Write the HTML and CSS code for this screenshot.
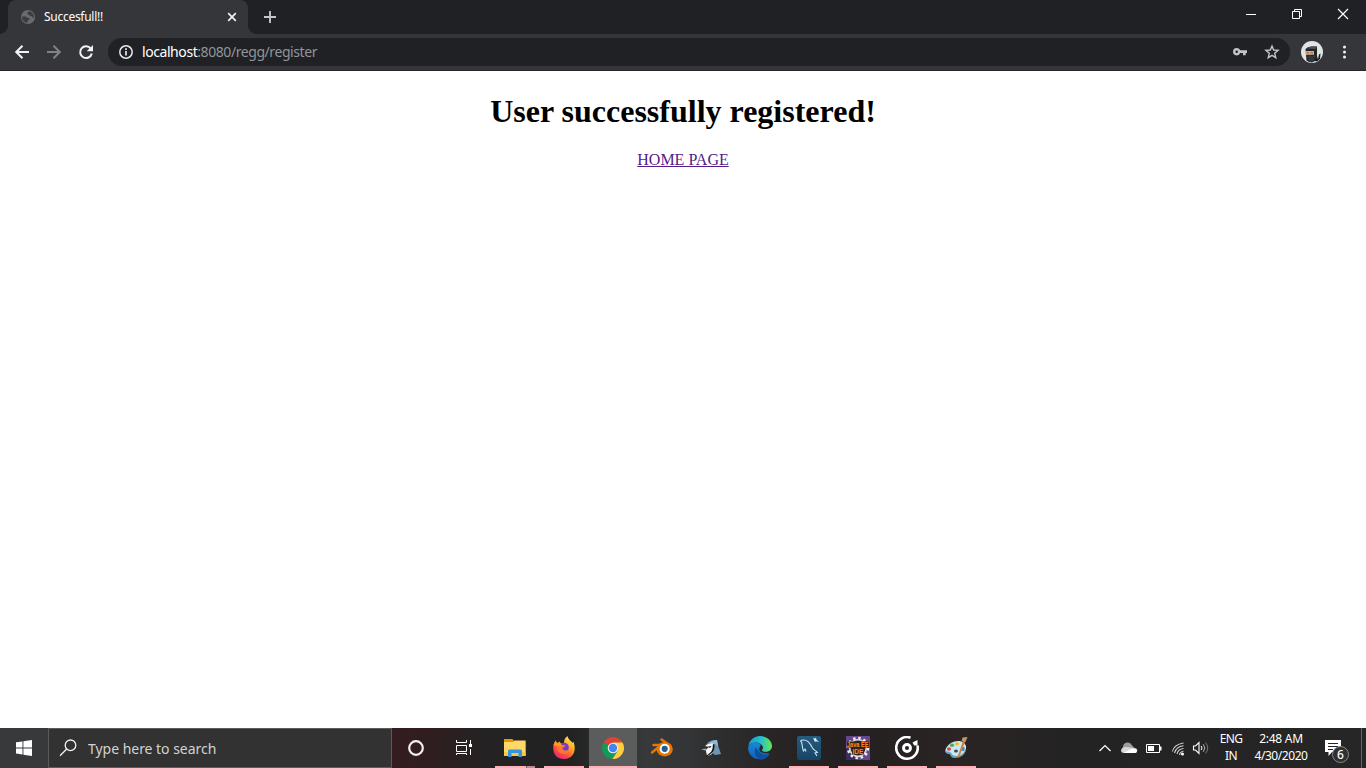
FILE: index.html
```html
<!DOCTYPE html>
<html lang="en">
<head>
<meta charset="utf-8">
<title>Succesfull!!</title>
<link rel="stylesheet" href="styles.css">
</head>
<body>
<div class="screen">
  <header class="tabstrip">
    <div class="tab">
      <svg class="globe" width="16" height="16" viewBox="0 0 16 16"><circle cx="8" cy="8" r="7" fill="#696b70"/><path d="M2 7.500h4l1.500 1.600h2v1.500l-1.600.9-.4 2.200C4.400 13.500 2 11.500 2 7.500zM9 2.200L7.300 4l.2 1.600H9l.9 1.700 1.800-.3 1 1.500 1.200.2C14.300 5 12 2.600 9 2.200z" fill="#3b3c40"/></svg>
      <span class="tab-title">Succesfull!!</span>
      <svg class="tab-close" width="10" height="10" viewBox="0 0 10 10"><path d="M1.200 1.200l7.600 7.600M8.800 1.200L1.200 8.800" stroke="#f1f1f2" stroke-width="1.700"/></svg>
    </div>
    <svg class="new-tab" width="14" height="14" viewBox="0 0 14 14"><path d="M7 1v12M1 7h12" stroke="#c5c6c8" stroke-width="1.900"/></svg>
    <div class="window-controls">
      <span class="control"><svg width="12" height="12" viewBox="0 0 12 12"><path d="M1 6.500h10" stroke="#fff"/></svg></span>
      <span class="control"><svg width="12" height="12" viewBox="0 0 12 12"><path d="M1.500 3.500h7v7h-7zM3.500 3.500v-2h7v7h-2" fill="none" stroke="#fff"/></svg></span>
      <span class="control"><svg width="12" height="12" viewBox="0 0 12 12"><path d="M1 1l10 10M11 1L1 11" stroke="#fff" stroke-width="1.200"/></svg></span>
    </div>
  </header>
  <nav class="toolbar">
    <svg class="nav-icon" width="16" height="16" viewBox="0 0 16 16"><path d="M15 8H2.500M8.500 1.700L2.200 8l6.300 6.300" fill="none" stroke="#f3f3f4" stroke-width="2"/></svg>
    <svg class="nav-icon" width="16" height="16" viewBox="0 0 16 16"><path d="M1 8h12.500M7.500 1.700L13.800 8l-6.300 6.300" fill="none" stroke="#818286" stroke-width="2"/></svg>
    <svg class="nav-icon" width="16" height="16" viewBox="0 0 16 16"><path d="M12.800 4.600A5.900 5.900 0 1 0 13.800 9.500" fill="none" stroke="#f3f3f4" stroke-width="2"/><path d="M15 1v6.300H8.700z" fill="#f3f3f4"/></svg>
    <div class="omnibox">
      <svg width="16" height="16" viewBox="0 0 16 16"><circle cx="8" cy="8" r="6.200" fill="none" stroke="#e8eaed" stroke-width="1.500"/><path d="M8 7v4.500M8 4.300v1.600" stroke="#e8eaed" stroke-width="1.700"/></svg>
      <span class="url"><b>localhost</b>:8080/regg/register</span>
      <svg class="key" width="16" height="16" viewBox="0 0 16 16"><path d="M4.700 4a3.700 3.700 0 1 0 3.500 5H11v2.200h2.700V9H15V6.300H8.200A3.700 3.700 0 0 0 4.700 4zm0 2.400a1.300 1.300 0 1 1 0 2.600 1.300 1.300 0 0 1 0-2.600z" fill="#c3c4c7" fill-rule="evenodd"/></svg>
      <svg width="16" height="16" viewBox="0 0 16 16"><path d="M8 2.100l1.700 3.900 4.400.4-3.400 2.900 1.100 4.400L8 11.400l-3.800 2.300 1.100-4.400-3.400-2.900 4.400-.4z" fill="none" stroke="#c3c4c7" stroke-width="1.400"/></svg>
    </div>
    <svg class="avatar" width="22" height="22" viewBox="0 0 22 22"><circle cx="11" cy="11" r="11" fill="#e2e3e5"/><path d="M4.500 8q2-2.500 6-2.500H16v10l-1 4-4 2q-4-.5-5.500-2z" fill="#20252a"/><path d="M5 7.500q2-2 6-2h5L14.500 8z" fill="#4a4f53"/><path d="M5 10h8v3.800H5z" fill="#dfa77b"/><path d="M5.500 11.500H8v.8H5.500zm4 0H12v.8H9.500z" fill="#7b4a35"/><path d="M6 14l6 1 3-1-3 7-4-.5z" fill="#2e3940"/><path d="M14 20l2-5 1 3.500 1-5 1.500-1-.5 5.500-3 2.500z" fill="#161b1f"/></svg>
    <svg class="menu" width="4" height="16" viewBox="0 0 4 16"><g fill="#f1f1f2"><circle cx="2.500" cy="3" r="1.500"/><circle cx="2.500" cy="8" r="1.500"/><circle cx="2.500" cy="13" r="1.500"/></g></svg>
  </nav>
  <main class="page">
    <h1>User successfully registered!</h1>
    <a class="home" href="#">HOME PAGE</a>
  </main>
  <footer class="taskbar">
    <div class="start"><svg width="16" height="16" viewBox="0 0 16 16"><path d="M0 2.300l6.500-.9v6H0zM7.400 1.300L16 0v7.400H7.400zM0 8.400h6.500v6.100L0 13.600zM7.400 8.400H16V16l-8.600-1.300z" fill="#fff"/></svg></div>
    <div class="search">
      <svg width="18" height="18" viewBox="0 0 18 18"><circle cx="11.500" cy="6.300" r="5.300" fill="none" stroke="#f0f0f0" stroke-width="1.300"/><path d="M7.700 10L1 16.700" stroke="#f0f0f0" stroke-width="1.300"/></svg>
      <span>Type here to search</span>
    </div>
    <div class="slot"><svg width="24" height="24" viewBox="0 0 24 24"><circle cx="12" cy="12" r="6.800" fill="none" stroke="#f4f0f0" stroke-width="2.200"/></svg></div>
    <div class="slot"><svg width="24" height="24" viewBox="0 0 24 24"><path d="M4.500 4v2.500h10V4M4.500 9.500h10v6h-10zM4.500 19v-1.500h10V19M18.500 4v4M18.500 13v6" fill="none" stroke="#fff"/><path d="M17 8h3v3h-3z" fill="#fff"/></svg></div>
    <div class="apps">
      <div class="app stacked"><svg width="24" height="24" viewBox="0 0 24 24"><path d="M1 3h8.500l1.500 2h11.500v14H1z" fill="#e69a00"/><path d="M1 6h9l1.500-1.500h11V20H1z" fill="#ffd865"/><path d="M1 16h21.500v4H1z" fill="#f8c845"/><path d="M5 21v-6q0-1.500 1.500-1.500h11q1.500 0 1.500 1.500v6h-3.500v-4h-7v4z" fill="#3593df"/></svg></div>
      <div class="app open"><svg width="24" height="24" viewBox="0 0 24 24"><defs><linearGradient id="fox" x1=".8" y1="0" x2=".2" y2="1"><stop stop-color="#fff24a"/><stop offset=".42" stop-color="#ff9b25"/><stop offset=".72" stop-color="#ff4746"/><stop offset="1" stop-color="#e3237e"/></linearGradient></defs><path d="M1.500 9L3.500 4.500 5 7l3-1.500.5 2 3.500-.3c0-3 1-5.500 3.500-7.200.2 3 4 5 5 7l.8-1.500c3 7 1.700 17-9.300 17.500C4 23 .2 17 1.500 9z" fill="url(#fox)"/><circle cx="12" cy="11.500" r="4.800" fill="#703bd1"/><path d="M5 9c2-2.500 4-1.500 5 0l3.500.4c-.6 1.600-2 1.700-3.200 2.500.4 2.800 4.300 3.500 6.800 1.600-1 5.500-10 6-11.800 0z" fill="#ff792c"/><path d="M1.500 9L3.500 4.500 5 7l4 .5v3z" fill="#ff9a20"/></svg></div>
      <div class="app open active"><svg width="24" height="24" viewBox="0 0 24 24"><path d="M12 12L2.500 6.500A11 11 0 0 1 21.500 6.500z" fill="#db4437"/><path d="M12 12L2.500 6.500A11 11 0 0 0 11.400 23l5.300-8z" fill="#119b58"/><path d="M12 6.500h9.500A11 11 0 0 1 11.400 23l5.400-8.200z" fill="#ffcd40"/><circle cx="12" cy="12" r="5.300" fill="#f1f3f4"/><circle cx="12" cy="12" r="4.200" fill="#4285f4"/></svg></div>
      <div class="app"><svg width="24" height="24" viewBox="0 0 24 24"><path d="M2 16.500L10 10M3.500 9H14M11.500 3.500L20 9.500" fill="none" stroke="#e87500" stroke-width="2.500" stroke-linecap="round"/><ellipse cx="14.700" cy="13.200" rx="8.100" ry="7.200" fill="#e87500"/><circle cx="14.700" cy="12.800" r="5" fill="#fff"/><circle cx="14.700" cy="12.800" r="3.100" fill="#205b91"/></svg></div>
      <div class="app"><svg width="24" height="24" viewBox="0 0 24 24"><path d="M7.500 8.500Q10.500 3.500 18 4l1.500 7 2.500 7-6 1-6-5z" fill="#6b96b8"/><path d="M10 6.500Q14 4 18 4l1 6-3-2z" fill="#91b8d1"/><path d="M6 10q4-3.500 8.500-2.500l1.500 4-3 6.500-4 2H8z" fill="#f2f4f5"/><path d="M1.500 12.500q3.500-3 6.500-2l2 .5-3 2.500-2-.5z" fill="#24282c"/><path d="M2 13l5-.5 1 1.500-2 .5z" fill="#a5aaae"/><path d="M9 10.500l3.500-.5-1.500 2z" fill="#101519"/><path d="M14 8l1.500.5q1 5-2.500 8.500L8 20.500q-1 .5-1-.5l5-4q2-3 2-8z" fill="#101519"/></svg></div>
      <div class="app"><svg width="24" height="24" viewBox="0 0 24 24"><defs><linearGradient id="wave"><stop stop-color="#159bd7"/><stop offset=".5" stop-color="#22bdd5"/><stop offset="1" stop-color="#67e74f"/></linearGradient><linearGradient id="sea" x2="0" y2="1"><stop stop-color="#1689d7"/><stop offset="1" stop-color="#1260b4"/></linearGradient></defs><path d="M0 11.500C2 6 9 5 13 9l-1.500 2.500c-1.300 4 3 6.500 9.500 5.500-3 6-9.500 7.500-14 5.500C2.500 20.500 0 16 0 11.500z" fill="url(#sea)"/><path d="M7.500 11.500C5 17 9 23.500 14 23.800c3.500-.3 6.500-3 8-6-3 1.500-9.500 1.500-11.500-3z" fill="#0e4f9f"/><path d="M.2 10C1.500 3.500 7 0 12 0c7 0 12 5 12 10 0 5.500-6.500 7-9.500 5-1.500-1 .8-1.500.4-4C14 7 5 4 .2 10z" fill="url(#wave)"/></svg></div>
      <div class="app open"><svg width="24" height="24" viewBox="0 0 24 24"><defs><linearGradient id="db" x2="0" y2="1"><stop stop-color="#245c80"/><stop offset="1" stop-color="#174466"/></linearGradient></defs><rect width="24" height="24" rx="2" fill="url(#db)"/><path d="M3.500 4.500C10 2.500 13 7 15.500 12c1.500 2.500 3.500 2.500 5 4.500l-2.500.5 2 3M3.500 4.500C6 7 4.500 10.500 6.500 15l1.500-2 1 2.500" fill="none" stroke="#d1e3ec" stroke-width="1.100"/><path d="M16 2l2 .6 1-1.100.3 2L22 6l-3-.7-1 .7z" fill="#e1edf4"/></svg></div>
      <div class="app open"><svg width="24" height="24" viewBox="0 0 24 24"><path d="M0 0h24v24H0z" fill="#65488c"/><path d="M0 12h12v12H0z" fill="#3a2d5c"/><circle cx="12" cy="12" r="9.800" fill="none" stroke="#eee" stroke-width="3" stroke-dasharray="2.400 2.730"/><circle cx="12" cy="12" r="8.300" fill="#292523" stroke="#d8d4d4" stroke-width="1.700"/><path d="M1 5.500h22v6H1zM6 12h12v6.500H6z" fill="#332019"/><g class="ee-label"><text x="1" y="11" textLength="21.500" lengthAdjust="spacingAndGlyphs">Java EE</text><text x="6.500" y="18" textLength="11" lengthAdjust="spacingAndGlyphs">IDE</text></g></svg></div>
      <div class="app open"><svg width="24" height="24" viewBox="0 0 24 24"><path d="M15.500 1.700A10.800 10.800 0 1 0 22.500 9.500" fill="none" stroke="#fff" stroke-width="2.600"/><circle cx="12" cy="12" r="3.500" fill="none" stroke="#fff" stroke-width="2.900"/><path d="M17.500 6.500L22.500 4v5.500h-3.300z" fill="#fff"/></svg></div>
      <div class="app open"><svg width="24" height="24" viewBox="0 0 24 24"><path d="M7 7c5-3 13-3 15 3 1 6-5 11-11 11-4 0-3-4-6-4-5 0-5-5 2-10z" fill="#c9e7f4"/><path d="M1 14c1 2 3 1 5 2s2 4 6 4 8-3 10-6c-1 5-6 8-11 8-5 0-4-4-6-4-3 0-4-2-4-4z" fill="#6aa5c0"/><ellipse cx="5" cy="13" rx="2" ry="1.700" fill="#d5443d"/><ellipse cx="8" cy="9.300" rx="2.100" ry="1.700" fill="#58ac42"/><ellipse cx="13" cy="7.800" rx="2.200" ry="1.600" fill="#edbe31"/><ellipse cx="12" cy="15" rx="2" ry="1.500" fill="#454a50"/><ellipse cx="19" cy="13" rx="1.800" ry="2.300" fill="#4689c7"/><path d="M13.500 21L19 5l2.200.6L15 21.500z" fill="#d17f2c"/><path d="M17.500 5l1-3.500L23.500 1l-2 5z" fill="#c39467"/></svg></div>
    </div>
    <div class="tray">
      <svg width="14" height="16" viewBox="0 0 14 16"><path d="M1.500 11L7 5.500l5.500 5.500" fill="none" stroke="#fff" stroke-width="1.200"/></svg>
      <svg class="cloud" width="18" height="16" viewBox="0 0 18 16"><path d="M3.500 10A2.800 2.800 0 0 1 3 6.500 4.800 4.800 0 0 1 12 5.200l2.500 3z" fill="#9d9d9d"/><path d="M1 10Q2 7 6 7l9 1q3 .5 2 3.500-.5 1.500-2.500 1.500H4q-3 0-3-3z" fill="#d8d8d8"/><path d="M3.500 13l7.500-4q4-1.200 5.800 1.500Q17 13 14.500 13z" fill="#fff"/></svg>
      <svg class="battery" width="16" height="16" viewBox="0 0 16 16"><path d="M.5 4.500h13v8H.5z" fill="none" stroke="#fff"/><path d="M2 6h6v5H2zM14 6.500h1.500v4H14z" fill="#fff"/></svg>
      <svg class="wifi" width="14" height="16" viewBox="0 0 14 16"><path d="M1.500 11.500Q3 4.500 12.500 3M3.500 13Q5 6.800 12.500 5.800M6 14Q7 9.200 12.500 8.500M8.500 15q.5-3.300 4-3.800" fill="none" stroke="#d2d2d2" stroke-width="1.100"/><circle cx="11.500" cy="14" r="1.500" fill="#fff"/></svg>
      <svg class="sound" width="18" height="16" viewBox="0 0 18 16"><path d="M1.500 6h2L7 2.500v11L3.500 10h-2z" fill="none" stroke="#fff" stroke-width="1.100"/><path d="M9.200 6q1.600 2 0 4" fill="none" stroke="#fff"/><path d="M11.300 4.300q3 3.700 0 7.400" fill="none" stroke="#bbb"/><path d="M13.500 2.500q4.500 5.500 0 11" fill="none" stroke="#777"/></svg>
      <div class="lang"><span>ENG</span><span>IN</span></div>
      <div class="clock"><span>2:48 AM</span><span>4/30/2020</span></div>
      <div class="notify">
        <svg width="16" height="17" viewBox="0 0 16 17"><path d="M0 0h16v12H7l-3.500 4v-4H0z" fill="#fff"/><path d="M3 3.500h10M3 6.500h10M3 9.500h5" stroke="#242424"/></svg>
        <span class="badge">6</span>
      </div>
      <i class="desktop-edge"></i>
    </div>
  </footer>
</div>
</body>
</html>
```

FILE: styles.css
```css
* { box-sizing: border-box; }
body { margin: 0; font-family: "Noto Sans", "Open Sans", sans-serif; }
svg { display: block; flex: none; }
.screen { width: 1366px; height: 768px; display: flex; flex-direction: column; overflow: hidden; background: #fff; }
.tabstrip { height: 34px; flex: none; display: flex; align-items: center; background: #202124; padding-left: 8px; }
.tab { position: relative; width: 240px; height: 34px; display: flex; align-items: center; padding: 0 11px 0 12px; background: #35363a; border-radius: 8px 8px 0 0; color: #fff; }
.tab::before, .tab::after { content: ""; position: absolute; bottom: 0; width: 8px; height: 8px; }
.tab::before { left: -8px; background: radial-gradient(circle at 0 0, #202124 7.5px, #35363a 8px); }
.tab::after { right: -8px; background: radial-gradient(circle at 100% 0, #202124 7.5px, #35363a 8px); }
.tab-title { margin-left: 8px; font-size: 12px; line-height: 16px; letter-spacing: -.28px; white-space: nowrap; }
.tab-close { margin-left: auto; }
.new-tab { margin-left: 15px; }
.window-controls { margin-left: auto; display: flex; align-self: flex-start; height: 28px; }
.control { width: 46px; display: flex; align-items: center; justify-content: center; }
.toolbar { height: 37px; flex: none; display: flex; align-items: center; padding: 0 20px 0 14px; background: #35363a; border-bottom: 1px solid #252327; }
.nav-icon { margin-right: 16px; }
.omnibox { width: 1182px; height: 28px; margin-left: -2px; padding: 0 10px; display: flex; align-items: center; border-radius: 14px; background: #202124; }
.url { margin-left: 8px; font-size: 14px; line-height: 20px; color: #919599; letter-spacing: -.43px; white-space: nowrap; }
.url b { font-weight: 400; color: #fff; }
.key { margin: 0 16px 0 auto; }
.avatar { margin-left: 11px; }
.menu { margin-left: auto; }
.page { flex: 1; padding-top: 22px; text-align: center; font-family: "Liberation Serif", serif; font-size: 16px; }
.page h1 { margin: 0 0 21px; font-size: 32px; line-height: 37px; }
.home { display: inline-block; line-height: 18px; color: #551a8b; }
.taskbar { height: 40px; flex: none; display: flex; background: linear-gradient(90deg, #37393b 0, #37393b 48px, #341c20 392px, #311d20 420px, #242323 490px, #222 570px, #37393a 645px, #333435 690px, #292626 760px, #241f20 840px, #2a2424 960px, #232323 1080px, #262626 1366px); color: #fff; }
.start, .slot { width: 48px; display: flex; align-items: center; justify-content: center; }
.search { width: 344px; display: flex; align-items: center; gap: 11px; padding: 0 10px; background: #323232; border: 1px solid #5b5b5b; color: #d2d2d2; font-size: 14px; letter-spacing: -.03px; }
.apps { display: flex; gap: 1px; margin-left: 3px; }
.app { position: relative; width: 48px; display: flex; align-items: center; justify-content: center; }
.open::after, .stacked::after { content: ""; position: absolute; left: 4px; right: 4px; bottom: 0; height: 2px; background: #ffb1b7; }
.stacked::after { background: linear-gradient(90deg, #ffb1b7 31px, #7c5b5f 31px, #7c5b5f 32px, #c38c91 32px); }
.active { background: #5b5c5c; }
.active::after { left: 0; right: 0; }
.ee-label { font: bold 7px "Liberation Sans", sans-serif; fill: #ff8a1c; }
.tray { margin-left: auto; display: flex; align-items: center; padding-right: 4px; }
.cloud { margin-left: 8px; }
.battery { margin-left: 8px; }
.wifi { margin-left: 9px; }
.sound { margin-left: 7px; }
.lang, .clock { display: flex; flex-direction: column; align-items: center; font-size: 12px; line-height: 17px; white-space: nowrap; padding-bottom: 2px; }
.lang { width: 36px; margin-left: 3px; letter-spacing: -.6px; }
.clock { width: 64px; letter-spacing: -.45px; }
.clock span:first-child { letter-spacing: -.25px; }
.notify { position: relative; width: 16px; height: 17px; margin-left: 12px; }
.badge { position: absolute; left: 7px; top: 6px; width: 17px; height: 17px; border: 1px solid #898989; border-radius: 50%; background: #303030; font-size: 12px; font-weight: 500; line-height: 15px; text-align: center; }
.desktop-edge { width: 1px; height: 40px; margin-left: 20px; background: #686868; }
```
